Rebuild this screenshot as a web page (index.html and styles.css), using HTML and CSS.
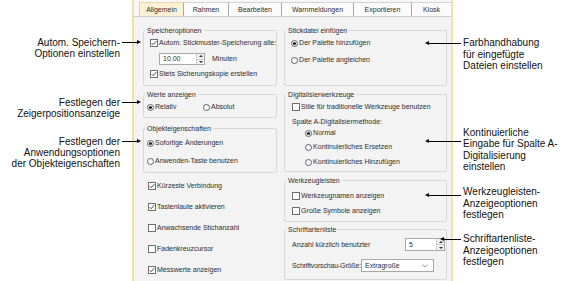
FILE: index.html
```html
<!DOCTYPE html>
<html lang="de">
<head>
<meta charset="utf-8">
<title>Optionen – Allgemein</title>
<link rel="stylesheet" href="styles.css">
</head>
<body>
<div class="figure">
  <div class="notes-left">
    <div class="note note-autosave">Autom. Speichern-<br>Optionen einstellen<span class="lead"></span></div>
    <div class="note note-pointer">Festlegen der<br>Zeigerpositionsanzeige<span class="lead"></span></div>
    <div class="note note-props">Festlegen der<br>Anwendungsoptionen<br>der Objekteigenschaften<span class="lead"></span></div>
  </div>

  <div class="dialog">
    <div class="tabs">
      <div class="tab active">Allgemein</div>
      <div class="tab">Rahmen</div>
      <div class="tab">Bearbeiten</div>
      <div class="tab">Warnmeldungen</div>
      <div class="tab">Exportieren</div>
      <div class="tab">Kiosk</div>
    </div>
    <div class="panel">
      <div class="col col-left">
        <div class="group g-save">
          <div class="group-title">Speicheroptionen</div>
          <div class="row r-autosave">
            <svg class="cb" viewBox="0 0 8 8"><rect x=".5" y=".5" width="7" height="7" fill="#fff" stroke="#6f6f6f"/><path d="M1.7 4.1 L3.2 5.7 L6.4 2.1" fill="none" stroke="#3a3a3a" stroke-width=".9"/></svg>
            <span>Autom. Stickmuster-Speicherung alle:</span>
          </div>
          <div class="row r-minutes">
            <div class="spin spin-min"><span class="spin-val">10.00</span><span class="spin-btns"><i class="up"></i><i class="dn"></i></span></div>
            <span class="minutes">Minuten</span>
          </div>
          <div class="row r-backup">
            <svg class="cb" viewBox="0 0 8 8"><rect x=".5" y=".5" width="7" height="7" fill="#fff" stroke="#6f6f6f"/><path d="M1.7 4.1 L3.2 5.7 L6.4 2.1" fill="none" stroke="#3a3a3a" stroke-width=".9"/></svg>
            <span>Stets Sicherungskopie erstellen</span>
          </div>
        </div>

        <div class="group g-view">
          <div class="group-title">Werte anzeigen</div>
          <div class="row r-view">
            <span class="opt opt-rel">
              <svg class="rb" viewBox="0 0 7 7"><circle cx="3.5" cy="3.5" r="3" fill="#fff" stroke="#5f5f5f"/><circle cx="3.5" cy="3.5" r="1.6" fill="#222"/></svg>Relativ
            </span>
            <span class="opt">
              <svg class="rb" viewBox="0 0 7 7"><circle cx="3.5" cy="3.5" r="3" fill="#fff" stroke="#5f5f5f"/></svg>Absolut
            </span>
          </div>
        </div>

        <div class="group g-props">
          <div class="group-title">Objekteigenschaften</div>
          <div class="row r-p1">
            <svg class="rb" viewBox="0 0 7 7"><circle cx="3.5" cy="3.5" r="3" fill="#fff" stroke="#5f5f5f"/><circle cx="3.5" cy="3.5" r="1.6" fill="#222"/></svg>
            <span>Sofortige Änderungen</span>
          </div>
          <div class="row r-p2">
            <svg class="rb" viewBox="0 0 7 7"><circle cx="3.5" cy="3.5" r="3" fill="#fff" stroke="#5f5f5f"/></svg>
            <span>Anwenden-Taste benutzen</span>
          </div>
        </div>

        <div class="checks">
          <div class="row">
            <svg class="cb" viewBox="0 0 8 8"><rect x=".5" y=".5" width="7" height="7" fill="#fff" stroke="#6f6f6f"/><path d="M1.7 4.1 L3.2 5.7 L6.4 2.1" fill="none" stroke="#3a3a3a" stroke-width=".9"/></svg>
            <span>Kürzeste Verbindung</span>
          </div>
          <div class="row">
            <svg class="cb" viewBox="0 0 8 8"><rect x=".5" y=".5" width="7" height="7" fill="#fff" stroke="#6f6f6f"/><path d="M1.7 4.1 L3.2 5.7 L6.4 2.1" fill="none" stroke="#3a3a3a" stroke-width=".9"/></svg>
            <span>Tastenlaute aktivieren</span>
          </div>
          <div class="row">
            <svg class="cb" viewBox="0 0 8 8"><rect x=".5" y=".5" width="7" height="7" fill="#fff" stroke="#6f6f6f"/></svg>
            <span>Anwachsende Stichanzahl</span>
          </div>
          <div class="row">
            <svg class="cb" viewBox="0 0 8 8"><rect x=".5" y=".5" width="7" height="7" fill="#fff" stroke="#6f6f6f"/></svg>
            <span>Fadenkreuzcursor</span>
          </div>
          <div class="row">
            <svg class="cb" viewBox="0 0 8 8"><rect x=".5" y=".5" width="7" height="7" fill="#fff" stroke="#6f6f6f"/><path d="M1.7 4.1 L3.2 5.7 L6.4 2.1" fill="none" stroke="#3a3a3a" stroke-width=".9"/></svg>
            <span>Messwerte anzeigen</span>
          </div>
        </div>
      </div>

      <div class="col col-right">
        <div class="group g-insert">
          <div class="group-title">Stickdatei einfügen</div>
          <div class="row r-i1">
            <svg class="rb" viewBox="0 0 7 7"><circle cx="3.5" cy="3.5" r="3" fill="#fff" stroke="#5f5f5f"/><circle cx="3.5" cy="3.5" r="1.6" fill="#222"/></svg>
            <span>Der Palette hinzufügen</span>
          </div>
          <div class="row r-i2">
            <svg class="rb" viewBox="0 0 7 7"><circle cx="3.5" cy="3.5" r="3" fill="#fff" stroke="#5f5f5f"/></svg>
            <span>Der Palette angleichen</span>
          </div>
        </div>

        <div class="group g-digit">
          <div class="group-title">Digitalisierwerkzeuge</div>
          <div class="row r-d1">
            <svg class="cb" viewBox="0 0 8 8"><rect x=".5" y=".5" width="7" height="7" fill="#fff" stroke="#6f6f6f"/></svg>
            <span>Stile für traditionelle Werkzeuge benutzen</span>
          </div>
          <div class="row r-d2"><span>Spalte A-Digitalisiermethode:</span></div>
          <div class="row r-d3 sub">
            <svg class="rb" viewBox="0 0 7 7"><circle cx="3.5" cy="3.5" r="3" fill="#fff" stroke="#5f5f5f"/><circle cx="3.5" cy="3.5" r="1.6" fill="#222"/></svg>
            <span>Normal</span>
          </div>
          <div class="row r-d4 sub">
            <svg class="rb" viewBox="0 0 7 7"><circle cx="3.5" cy="3.5" r="3" fill="#fff" stroke="#5f5f5f"/></svg>
            <span>Kontinuierliches Ersetzen</span>
          </div>
          <div class="row r-d5 sub">
            <svg class="rb" viewBox="0 0 7 7"><circle cx="3.5" cy="3.5" r="3" fill="#fff" stroke="#5f5f5f"/></svg>
            <span>Kontinuierliches Hinzufügen</span>
          </div>
        </div>

        <div class="group g-tools">
          <div class="group-title">Werkzeugleisten</div>
          <div class="row r-t1">
            <svg class="cb" viewBox="0 0 8 8"><rect x=".5" y=".5" width="7" height="7" fill="#fff" stroke="#6f6f6f"/></svg>
            <span>Werkzeugnamen anzeigen</span>
          </div>
          <div class="row r-t2">
            <svg class="cb" viewBox="0 0 8 8"><rect x=".5" y=".5" width="7" height="7" fill="#fff" stroke="#6f6f6f"/></svg>
            <span>Große Symbole anzeigen</span>
          </div>
        </div>

        <div class="group g-fonts">
          <div class="group-title">Schriftartenliste</div>
          <div class="row r-f1">
            <span>Anzahl kürzlich benutzter</span>
            <div class="spin spin-count"><span class="spin-val">5</span><span class="spin-btns"><i class="up"></i><i class="dn"></i></span></div>
          </div>
          <div class="row r-f2">
            <span class="f-label">Schriftvorschau-Größe:</span>
            <div class="select"><span>Extragroße</span><svg class="chev" viewBox="0 0 6 4"><path d="M.5 .7 L3 3 L5.5 .7" fill="none" stroke="#777" stroke-width=".8"/></svg></div>
          </div>
        </div>
      </div>
    </div>
  </div>

  <div class="notes-right">
    <div class="note note-colors">Farbhandhabung<br>für eingefügte<br>Dateien einstellen<span class="lead"></span></div>
    <div class="note note-digit">Kontinuierliche<br>Eingabe für Spalte A-<br>Digitalisierung<br>einstellen<span class="lead"></span></div>
    <div class="note note-tools">Werkzeugleisten-<br>Anzeigeoptionen<br>festlegen<span class="lead"></span></div>
    <div class="note note-fonts">Schriftartenliste-<br>Anzeigeoptionen<br>festlegen<span class="lead"></span></div>
  </div>
</div>
</body>
</html>
```

FILE: styles.css
```css
* { box-sizing: border-box; }

html, body {
  margin: 0;
  background: #fff;
}

body {
  width: 578px;
  height: 281px;
  overflow: hidden;
  font-family: "Liberation Sans", Arial, sans-serif;
}

.figure {
  display: flex;
  height: 281px;
}

/* ---------- callout notes ---------- */
.notes-left,
.notes-right {
  display: flex;
  flex-direction: column;
  font-size: 10px;
  color: #111;
}

.notes-left {
  flex: 0 0 132px;
  align-items: flex-end;
  padding-right: 12px;
  line-height: 11px;
}

.notes-right {
  flex: 1;
  padding-left: 10px;
  line-height: 11.5px;
}

.note {
  position: relative;
  white-space: nowrap;
}

.notes-left .note { text-align: right; }

.note-autosave { margin-top: 37px; }
.note-pointer { margin-top: 38px; }
.note-props { margin-top: 17px; }

.note-colors { margin-top: 37px; }
.note-digit { margin-top: 55px; }
.note-tools { margin-top: 13.5px; }
.note-fonts { margin-top: 12.5px; }

.lead {
  position: absolute;
  height: 1px;
  background: #000;
}

.notes-left .lead {
  left: calc(100% + 2px);
  width: 16px;
  top: 5px;
}

.notes-left .lead::after {
  content: "";
  position: absolute;
  right: -3px;
  top: -2px;
  border-left: 4px solid #000;
  border-top: 2.5px solid transparent;
  border-bottom: 2.5px solid transparent;
}

.notes-right .lead {
  left: -35px;
  width: 33px;
  top: 6px;
}

.notes-right .lead::before {
  content: "";
  position: absolute;
  left: -3px;
  top: -2px;
  border-right: 4px solid #000;
  border-top: 2.5px solid transparent;
  border-bottom: 2.5px solid transparent;
}

.note-digit .lead { top: 14px; }
.note-tools .lead { top: 9px; }
.note-fonts .lead { left: -20px; width: 18px; }

/* ---------- dialog ---------- */
.dialog {
  flex: 0 0 321px;
  display: flex;
  flex-direction: column;
  border-left: 2px solid #f5dfae;
  border-right: 2px solid #f5dfae;
  background: #f3f3f3;
  font-size: 7px;
  color: #2e2e2e;
}

.tabs {
  display: flex;
  height: 16px;
  padding: 2px 0 0 5px;
  background: #f7f7f7;
}

.tab {
  height: 14px;
  line-height: 13px;
  text-align: center;
  white-space: nowrap;
  background: #fbfbfb;
  border-top: 1px solid #d2d2d2;
  border-right: 1px solid #a9a9a9;
}

.tab:first-child { border-left: 1px solid #d2d2d2; }

.tab.active {
  background: #fdf1d5;
  border-top-color: #ecd7a6;
}

.tab:nth-child(1) { width: 45px; }
.tab:nth-child(2) { width: 45px; }
.tab:nth-child(3) { width: 53px; }
.tab:nth-child(4) { width: 72px; }
.tab:nth-child(5) { width: 58px; }
.tab:nth-child(6) { width: 39px; border-right: none; }

.panel {
  flex: 1;
  display: flex;
  gap: 7px;
  padding: 0 4px 0 9px;
  border-top: 1px solid #cfcfcf;
}

.col {
  display: flex;
  flex-direction: column;
}

.col-left { flex: 0 0 134px; }
.col-right { flex: 0 0 163px; }

.group {
  display: flex;
  flex-direction: column;
  border: 1px solid #d7d7d7;
  border-radius: 2px;
}

.group-title {
  align-self: flex-start;
  height: 9px;
  line-height: 9px;
  margin: -5px 0 0 1px;
  padding: 0 2px;
  background: #f3f3f3;
  white-space: nowrap;
}

.row {
  display: flex;
  align-items: center;
  height: 10px;
  line-height: 10px;
  white-space: nowrap;
}

.cb {
  flex: none;
  width: 8px;
  height: 8px;
  margin-right: 1px;
}

.rb {
  flex: none;
  width: 7px;
  height: 7px;
  margin-right: 1px;
}

.opt {
  display: flex;
  align-items: center;
}

.opt-rel { width: 56px; }

/* spin boxes */
.spin {
  display: flex;
  border: 1px solid #a8a8a8;
  background: #fff;
}

.spin-val {
  flex: 1;
  padding-left: 3px;
  display: flex;
  align-items: center;
}

.spin-btns {
  flex: 0 0 8px;
  display: flex;
  flex-direction: column;
  border-left: 1px solid #cfcfcf;
  background: #f1f1f1;
}

.spin-btns i {
  flex: 1;
  display: flex;
  align-items: center;
  justify-content: center;
}

.spin-btns i::before {
  content: "";
  border-left: 2px solid transparent;
  border-right: 2px solid transparent;
}

.spin-btns .up::before { border-bottom: 2px solid #333; }
.spin-btns .dn::before { border-top: 2px solid #333; }
.spin-btns .dn { border-top: 1px solid #cfcfcf; }

.select {
  flex: 0 0 73px;
  height: 13px;
  display: flex;
  align-items: center;
  justify-content: space-between;
  padding: 0 5px 0 3px;
  border: 1px solid #a8a8a8;
  background: #fff;
}

.chev {
  width: 6px;
  height: 4px;
}

/* left column groups */
.g-save { height: 56px; margin-top: 13px; }
.g-save .row { margin-left: 6px; }
.r-autosave { margin-top: 3px; }
.r-minutes { height: 12px; margin-top: 5px; }
.r-backup { margin-top: 4px; }

.spin-min {
  width: 46px;
  height: 12px;
  margin-left: 9px;
}

.minutes { margin-left: 7px; }

.g-view { height: 24px; margin-top: 8px; }
.g-view .row { margin-left: 3px; }
.r-view { margin-top: 3px; }

.g-props { height: 45px; margin-top: 10px; }
.g-props .row { margin-left: 3px; }
.r-p1 { margin-top: 5px; }
.r-p2 { margin-top: 8px; }

.checks {
  display: flex;
  flex-direction: column;
  gap: 11px;
  margin: 8px 0 0 5px;
}

/* right column groups */
.g-insert { height: 56px; margin-top: 13px; }
.g-insert .row { margin-left: 6px; }
.r-i1 { margin-top: 3px; }
.r-i2 { margin-top: 7px; }

.g-digit { height: 78px; margin-top: 8px; }
.g-digit .row { margin-left: 7px; }
.g-digit .row.sub { margin-left: 20px; }
.r-d1 { margin-top: 3px; }
.r-d2 { margin-top: 5px; }
.r-d3 { margin-top: 1px; }
.r-d4 { margin-top: 4px; }
.r-d5 { margin-top: 5px; }

.g-tools { height: 42px; margin-top: 8px; }
.g-tools .row { margin-left: 7px; }
.r-t1 { margin-top: 6px; }
.r-t2 { margin-top: 5px; }

.g-fonts { height: 51px; margin-top: 7px; }
.g-fonts .row { margin-left: 7px; height: 13px; }
.r-f1 { margin-top: 4px; margin-right: 1px; }
.r-f2 { margin-top: 8px; }

.spin-count {
  width: 40px;
  height: 13px;
  margin-left: auto;
}

.f-label {
  flex: 0 0 69px;
  letter-spacing: -0.16px;
}
```
